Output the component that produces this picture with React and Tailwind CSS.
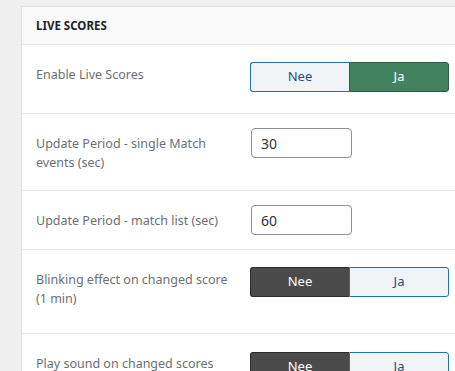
const font = { fontFamily: '"Segoe UI", "Noto Sans", sans-serif' };

function Toggle({ value }) {
  const on = value === "ja";
  return (
    <div className="flex w-[199px] h-[30px] text-[13px]">
      <div
        className={
          on
            ? "flex-1 flex items-center justify-center rounded-l-[3px] border border-r-0 border-[#2271b1] bg-[#f0f4f6] text-[#1d4f7a]"
            : "flex-1 flex items-center justify-center rounded-l-[3px] border border-r-0 border-[#2c2c2c] bg-[#4b4b4b] text-white"
        }
      >
        Nee
      </div>
      <div
        className={
          on
            ? "flex-1 flex items-center justify-center rounded-r-[3px] border border-[#2f5c43] bg-[#43825f] text-white"
            : "flex-1 flex items-center justify-center rounded-r-[3px] border border-[#2271b1] bg-[#f0f4f6] text-[#1d4f7a]"
        }
      >
        Ja
      </div>
    </div>
  );
}

function NumInput({ value }) {
  return (
    <input
      type="text"
      defaultValue={value}
      className="ml-px w-[101px] h-[30px] rounded-[4px] border border-[#8c8f94] bg-white px-[9px] text-[14px] text-[#2c3338] outline-none"
    />
  );
}

function Row({ label, children, h, ctrlTop }) {
  return (
    <div className={`flex border-t border-[#e6e6e6] ${h}`}>
      <div className="w-[228px] shrink-0 pl-[14px] pr-[10px] pt-[20px] text-[12.5px] leading-[19px] text-[#6b6f74]">
        {label}
      </div>
      <div className={ctrlTop}>{children}</div>
    </div>
  );
}

export default function App() {
  return (
    <div className="h-[371px] w-[455px] overflow-hidden bg-[#f0f0f0] pt-[6px] pl-[21px]" style={font}>
      <div className="w-[460px] border-l border-t border-[#e0e0e0] bg-white">
        <div className="h-[37px] bg-[#f9f9f9] pl-[14px] flex items-center text-[11.5px] font-bold text-[#1d2327]">
          LIVE SCORES
        </div>
        <Row label="Enable Live Scores" h="h-[69px]" ctrlTop="pt-[17px]">
          <Toggle value="ja" />
        </Row>
        <Row label={<>Update Period - single Match<br />events (sec)</>} h="h-[77px]" ctrlTop="pt-[14px]">
          <NumInput value="30" />
        </Row>
        <Row label="Update Period - match list (sec)" h="h-[59px]" ctrlTop="pt-[14px]">
          <NumInput value="60" />
        </Row>
        <Row label={<>Blinking effect on changed score<br />(1 min)</>} h="h-[84px]" ctrlTop="pt-[17px]">
          <Toggle value="nee" />
        </Row>
        <Row label="Play sound on changed scores" h="h-[84px]" ctrlTop="pt-[18px]">
          <Toggle value="nee" />
        </Row>
      </div>
    </div>
  );
}
